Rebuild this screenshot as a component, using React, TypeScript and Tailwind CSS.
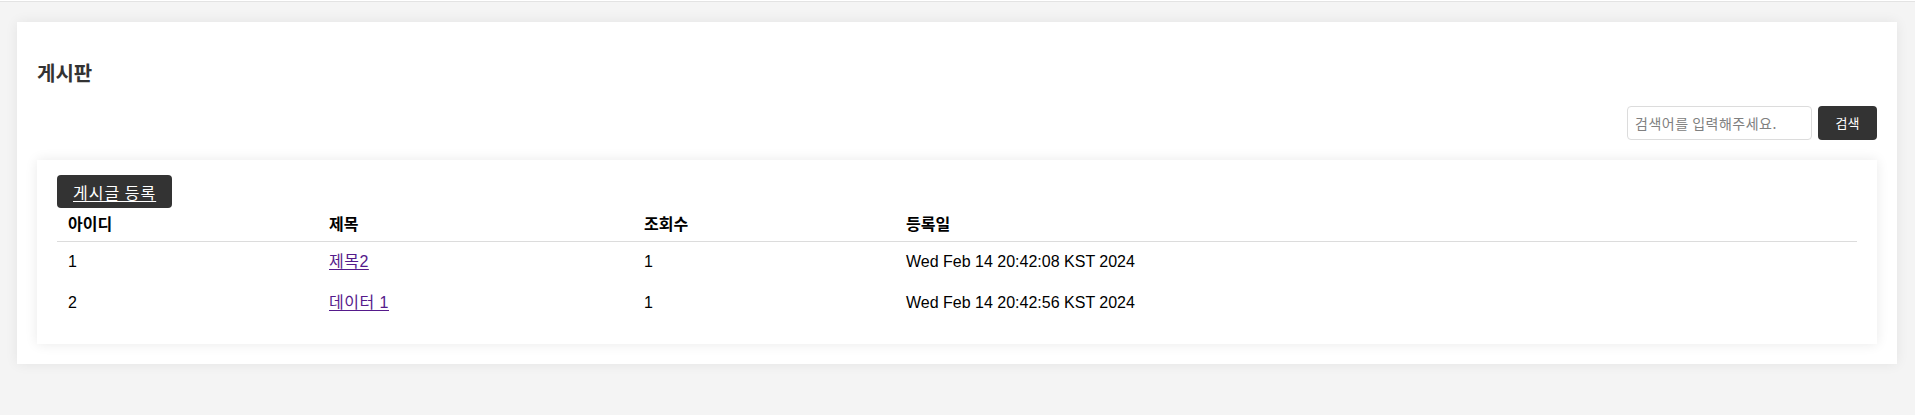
import React from 'react';

const posts = [
  { id: 1, title: '제목2', views: 1, createdAt: 'Wed Feb 14 20:42:08 KST 2024' },
  { id: 2, title: '데이터 1', views: 1, createdAt: 'Wed Feb 14 20:42:56 KST 2024' },
];

export default function App() {
  return (
    <div className="min-h-screen bg-[#f4f4f4] pb-[50px] font-['Liberation_Sans','Noto_Sans_CJK_KR',sans-serif] text-black">
      {/* top hairline */}
      <div className="mt-px h-px bg-[#e3e3e3]" />

      {/* board container */}
      <div className="ml-[17px] mr-[18px] mt-5 bg-white px-5 pb-5 pt-[37px] shadow-[0_0_12px_rgba(0,0,0,0.07)]">
        <h2 className="font-['Noto_Sans_CJK_KR',sans-serif] text-[20px] font-bold leading-7 text-[#333]">게시판</h2>

        {/* search */}
        <div className="mt-[19px] flex justify-end gap-[6px]">
          <input
            type="text"
            placeholder="검색어를 입력해주세요."
            className="h-[34px] w-[185px] rounded-[4px] border border-[#dcdcdc] px-[7px] font-['Noto_Sans_CJK_KR',sans-serif] text-[14px] tracking-[0.5px] text-[#333] placeholder:text-[#808080] outline-none"
          />
          <button className="h-[34px] w-[59px] rounded-[4px] bg-[#333] font-['Noto_Sans_CJK_KR',sans-serif] text-[13px] text-white">
            검색
          </button>
        </div>

        {/* list */}
        <div className="mt-5 bg-white px-5 pb-5 pt-[15px] shadow-[0_0_12px_rgba(0,0,0,0.09)]">
          <button className="h-[33px] rounded-[4px] bg-[#333] px-4 font-['Noto_Sans_CJK_KR',sans-serif] text-[16px] leading-none tracking-[1px] text-white">
            <a href="#" className="underline underline-offset-2">게시글 등록</a>
          </button>

          <table className="w-full table-fixed border-collapse text-left">
            <thead>
              <tr className="border-b border-[#dcdcdc]">
                <th className="w-[261px] px-[11px] pb-[6px] pt-[3px] font-['Noto_Sans_CJK_KR',sans-serif] text-[16px] font-bold leading-6">아이디</th>
                <th className="w-[315px] px-[11px] pb-[6px] pt-[3px] font-['Noto_Sans_CJK_KR',sans-serif] text-[16px] font-bold leading-6">제목</th>
                <th className="w-[262px] px-[11px] pb-[6px] pt-[3px] font-['Noto_Sans_CJK_KR',sans-serif] text-[16px] font-bold leading-6">조회수</th>
                <th className="px-[11px] pb-[6px] pt-[3px] font-['Noto_Sans_CJK_KR',sans-serif] text-[16px] font-bold leading-6">등록일</th>
              </tr>
            </thead>
            <tbody>
              {posts.map((p) => (
                <tr key={p.id} className="h-[41px] text-[16px]">
                  <td className="px-[11px]">{p.id}</td>
                  <td className="px-[11px]">
                    <a href="#" className="text-[#551a8b] underline underline-offset-2 tracking-[0.5px]">
                      {p.title}
                    </a>
                  </td>
                  <td className="px-[11px]">{p.views}</td>
                  <td className="px-[11px]">{p.createdAt}</td>
                </tr>
              ))}
            </tbody>
          </table>
        </div>
      </div>
    </div>
  );
}
